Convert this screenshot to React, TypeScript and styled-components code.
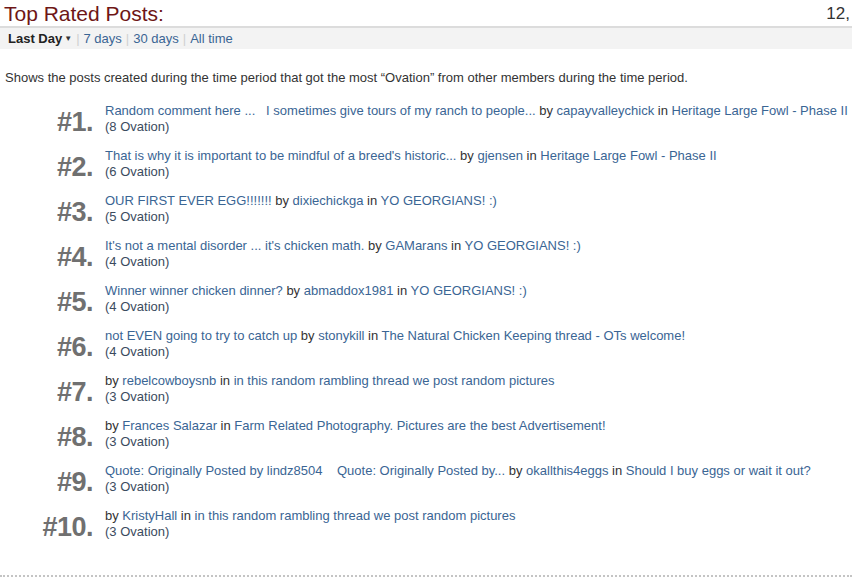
import React from "react";
import styled, { createGlobalStyle } from "styled-components";

const GlobalStyle = createGlobalStyle`
  body {
    margin: 0;
    background: #fff;
    font-family: Arial, "Liberation Sans", Helvetica, sans-serif;
    color: #333;
  }
`;

const Page = styled.div`
  width: 852px;
  height: 583px;
  overflow: hidden;
  position: relative;
`;

const Header = styled.div`
  display: flex;
  justify-content: space-between;
  align-items: flex-end;
  height: 26px;
  padding: 0 0 0 4px;
  border-bottom: 2px solid #dcdcdc;
  white-space: nowrap;
`;

const Title = styled.h2`
  margin: 0;
  font-size: 21px;
  font-weight: normal;
  color: #6e1616;
  line-height: 25px;
`;

const Count = styled.span`
  font-size: 17px;
  color: #333;
  line-height: 24px;
  margin-right: 2px;
`;

const FilterBar = styled.div`
  display: flex;
  align-items: center;
  height: 21px;
  padding-left: 8px;
  background: #f3f3f3;
  font-size: 13px;
`;

const Current = styled.span`
  font-weight: bold;
  color: #222;
`;

const Caret = styled.span`
  font-size: 8px;
  margin-left: 2px;
  color: #333;
`;

const Sep = styled.span`
  color: #d0d0d0;
  margin: 0 4px;
`;

const Link = styled.a`
  color: #3a6594;
  text-decoration: none;
  cursor: pointer;
`;

const Intro = styled.p`
  margin: 21px 0 17px 5px;
  font-size: 13px;
  line-height: 16px;
  color: #333;
`;

const List = styled.ol`
  list-style: none;
  margin: 0;
  padding: 0;
`;

const Row = styled.li`
  display: grid;
  grid-template-columns: 93px 1fr;
  column-gap: 12px;
  align-items: end;
  margin-bottom: 13px;
`;

const Rank = styled.span`
  text-align: right;
  font-size: 27px;
  font-weight: bold;
  color: #707070;
  line-height: 27px;
  letter-spacing: -0.5px;
  margin-bottom: -1px;
`;

const Body = styled.div`
  font-size: 13px;
  line-height: 16px;
  white-space: nowrap;
`;

const Plain = styled.span`
  color: #333;
`;

const Ovation = styled.div`
  color: #3b4b5e;
`;

const Footer = styled.div`
  position: absolute;
  left: 0;
  right: 0;
  top: 575px;
  border-top: 2px dotted #c4c4c4;
`;

type Post = {
  title?: string;
  author: string;
  thread: string;
  ovation: number;
};

const posts: Post[] = [
  {
    title: "Random comment here ...\u00a0\u00a0\u00a0I sometimes give tours of my ranch to people...",
    author: "capayvalleychick",
    thread: "Heritage Large Fowl - Phase II",
    ovation: 8,
  },
  {
    title: "That is why it is important to be mindful of a breed's historic...",
    author: "gjensen",
    thread: "Heritage Large Fowl - Phase II",
    ovation: 6,
  },
  {
    title: "OUR FIRST EVER EGG!!!!!!!",
    author: "dixiechickga",
    thread: "YO GEORGIANS! :)",
    ovation: 5,
  },
  {
    title: "It's not a mental disorder ... it's chicken math.",
    author: "GAMarans",
    thread: "YO GEORGIANS! :)",
    ovation: 4,
  },
  {
    title: "Winner winner chicken dinner?",
    author: "abmaddox1981",
    thread: "YO GEORGIANS! :)",
    ovation: 4,
  },
  {
    title: "not EVEN going to try to catch up",
    author: "stonykill",
    thread: "The Natural Chicken Keeping thread - OTs welcome!",
    ovation: 4,
  },
  {
    author: "rebelcowboysnb",
    thread: "in this random rambling thread we post random pictures",
    ovation: 3,
  },
  {
    author: "Frances Salazar",
    thread: "Farm Related Photography. Pictures are the best Advertisement!",
    ovation: 3,
  },
  {
    title: "Quote: Originally Posted by lindz8504\u00a0\u00a0\u00a0\u00a0Quote: Originally Posted by...",
    author: "okallthis4eggs",
    thread: "Should I buy eggs or wait it out?",
    ovation: 3,
  },
  {
    author: "KristyHall",
    thread: "in this random rambling thread we post random pictures",
    ovation: 3,
  },
];

export default function App() {
  return (
    <Page>
      <GlobalStyle />
      <Header>
        <Title>Top Rated Posts:</Title>
        <Count>12,</Count>
      </Header>
      <FilterBar>
        <Current>Last Day</Current>
        <Caret>▼</Caret>
        <Sep>|</Sep>
        <Link>7 days</Link>
        <Sep>|</Sep>
        <Link>30 days</Link>
        <Sep>|</Sep>
        <Link>All time</Link>
      </FilterBar>
      <Intro>
        Shows the posts created during the time period that got the most “Ovation” from other
        members during the time period.
      </Intro>
      <List>
        {posts.map((p, i) => (
          <Row key={i}>
            <Rank>#{i + 1}.</Rank>
            <Body>
              <div>
                {p.title && (
                  <>
                    <Link>{p.title}</Link>{" "}
                  </>
                )}
                <Plain>by </Plain>
                <Link>{p.author}</Link>
                <Plain> in </Plain>
                <Link>{p.thread}</Link>
              </div>
              <Ovation>({p.ovation} Ovation)</Ovation>
            </Body>
          </Row>
        ))}
      </List>
      <Footer />
    </Page>
  );
}
